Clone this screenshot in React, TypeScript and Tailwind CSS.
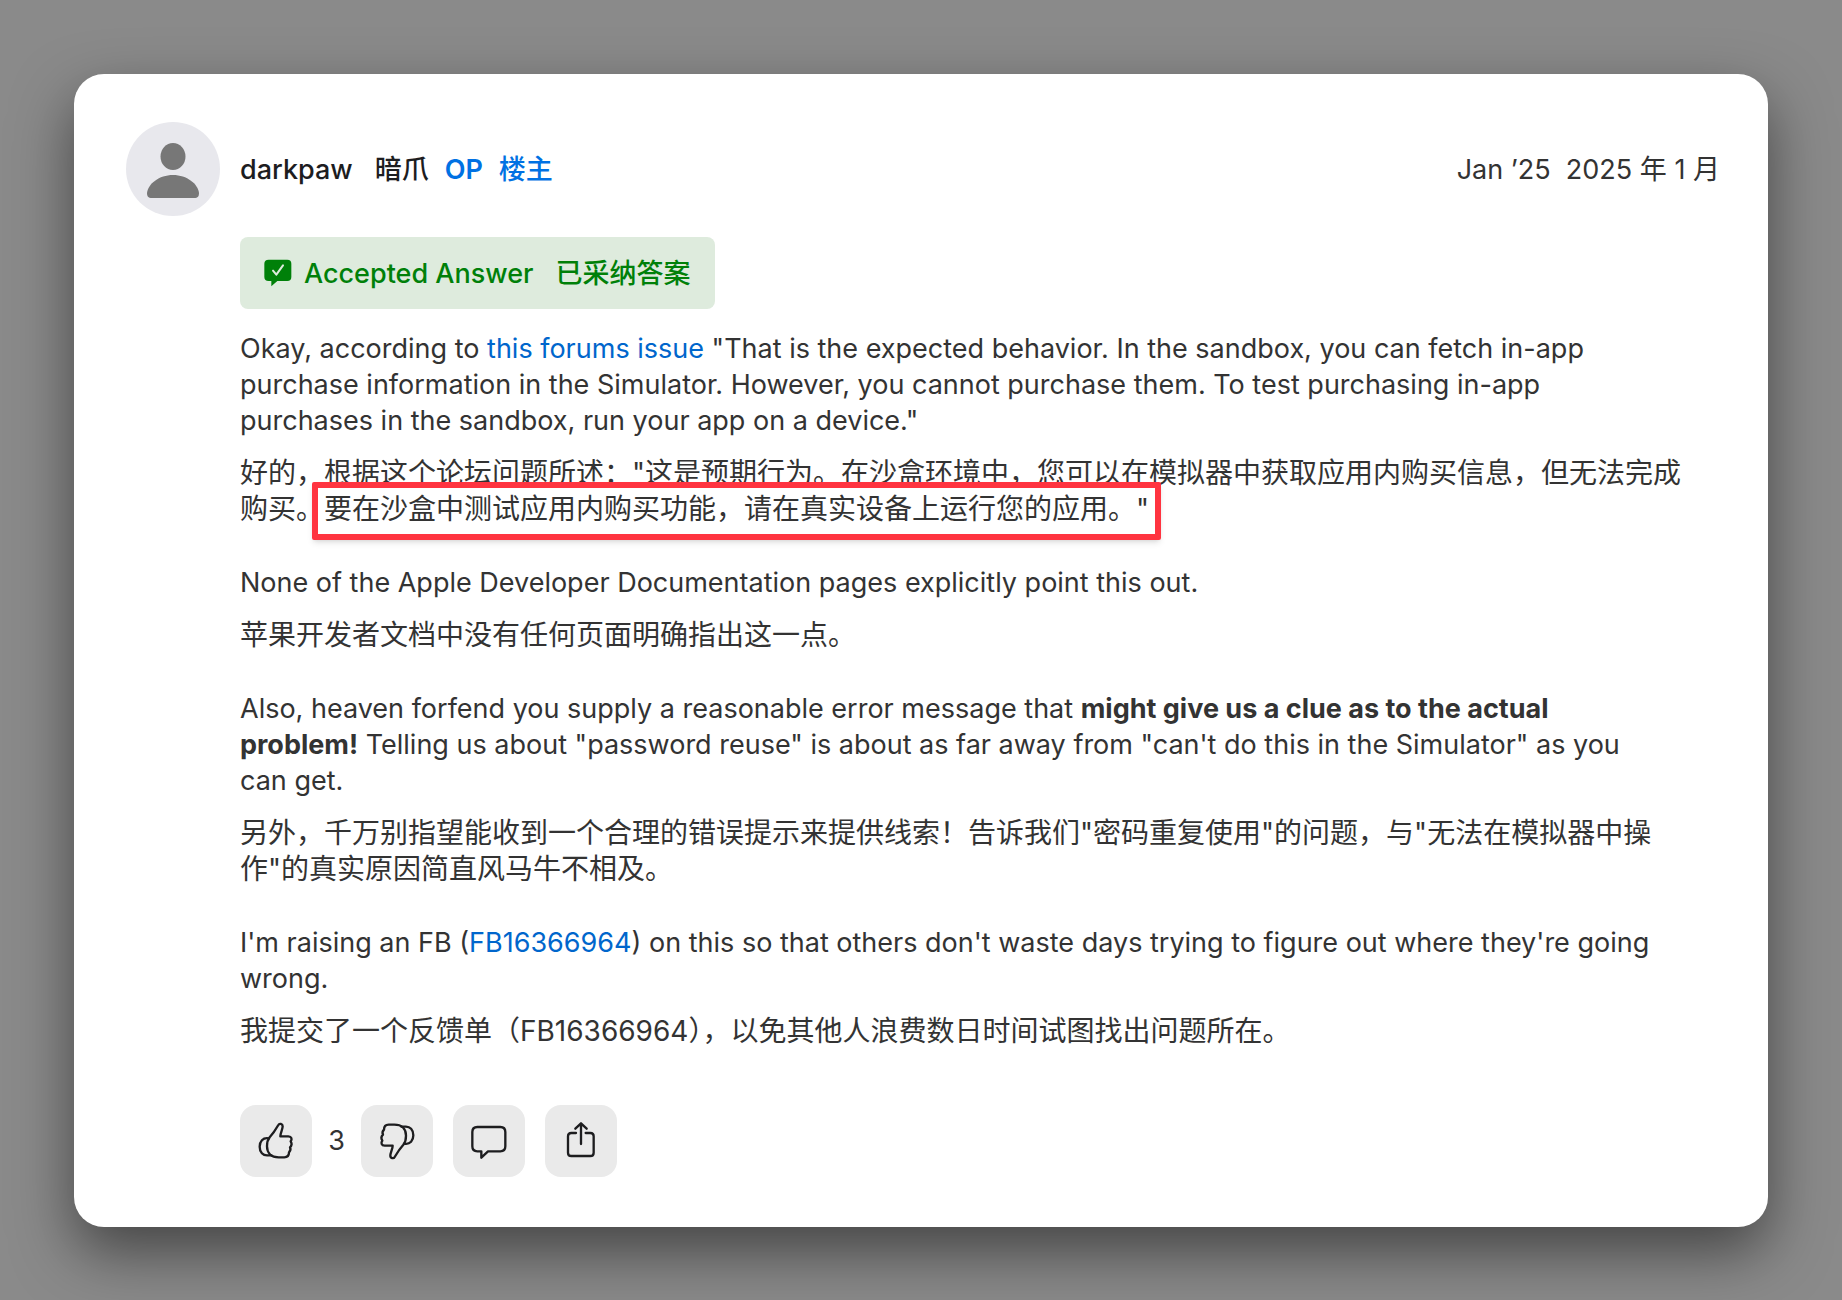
import { FC, ReactNode } from "react";

const LikeIcon: FC = () => (
  <svg className="size-9 overflow-visible" viewBox="0 0 108 108" fill="none" stroke="currentColor" strokeWidth="7" strokeLinecap="round" strokeLinejoin="round">
    <path d="M35 43C45 32 54 18 61 6C64 0 74 2 74 10C74 19 67 30 67 40H91C101 40 103 49 98 55C102 61 101 68 96 73C99 79 97 84 93 88C93 98 88 103 79 103H62C40 103 27 90 27 70C27 58 30 49 35 43Z" />
    <path d="M32 46C14 43 5 56 5 71C5 87 14 99 31 97H40" />
  </svg>
);

const DislikeIcon: FC = () => (
  <svg className="size-9 overflow-visible" viewBox="0 0 108 108" fill="none" stroke="currentColor" strokeWidth="7" strokeLinecap="round" strokeLinejoin="round">
    <g transform="rotate(180 54 54)">
      <path d="M35 43C45 32 54 18 61 6C64 0 74 2 74 10C74 19 67 30 67 40H91C101 40 103 49 98 55C102 61 101 68 96 73C99 79 97 84 93 88C93 98 88 103 79 103H62C40 103 27 90 27 70C27 58 30 49 35 43Z" />
      <path d="M32 46C14 43 5 56 5 71C5 87 14 99 31 97H40" />
    </g>
  </svg>
);

const CommentIcon: FC = () => (
  <svg className="size-9 overflow-visible" viewBox="0 0 108 108" fill="none" stroke="currentColor" strokeWidth="7" strokeLinejoin="round">
    <path d="M19 12H88Q103 12 103 27V70Q103 85 88 85H51L31 104V85H19Q4 85 4 70V27Q4 12 19 12Z" />
  </svg>
);

const ShareIcon: FC = () => (
  <svg className="size-9 overflow-visible" viewBox="0 0 108 108" fill="none" stroke="currentColor" strokeWidth="7" strokeLinecap="round" strokeLinejoin="round">
    <path d="M39 30H25Q15 30 15 40V89Q15 99 25 99H82Q92 99 92 89V40Q92 30 82 30H68" />
    <path d="M54 63V2M37 17L54 1L71 17" />
  </svg>
);

const ActionButton: FC<{ label: string; children: ReactNode }> = ({ label, children }) => (
  <button aria-label={label} className="flex size-[72px] items-center justify-center rounded-2xl bg-[#eaeaea] text-[#1d1d1f]">
    {children}
  </button>
);

const En: FC<{ children: ReactNode }> = ({ children }) => (
  <p className="text-[27px] leading-9">{children}</p>
);

const Zh: FC<{ children: ReactNode }> = ({ children }) => (
  <p lang="zh-CN" className="mt-4 -mr-5 text-[28px] leading-9">{children}</p>
);

export default function App() {
  return (
    <main className="min-h-screen bg-[#8a8a8a] p-[74px] font-['Inter','Noto_Sans_CJK_SC',sans-serif] text-[#333333]">
      <article className="rounded-[30px] bg-white pt-12 pr-12 pb-[50px] pl-13 shadow-[0_25px_60px_rgba(0,0,0,0.5)]">
        <header className="flex items-center">
          <svg className="size-[94px] shrink-0" viewBox="0 0 94 94">
            <circle cx="47" cy="47" r="47" fill="#e8e8ed" />
            <ellipse cx="47" cy="34.5" rx="12.5" ry="13.5" fill="#777777" />
            <path d="M26 76C22 76 21 74 21 71C22 62 33 53 47 53S72 62 73 71C73 74 72 76 68 76Z" fill="#777777" />
          </svg>
          <div className="ml-5 flex pt-0.5 text-[27px] leading-9 font-medium text-[#1d1d1f]">
            <span>darkpaw</span>
            <span className="ml-[22px]">暗爪</span>
            <span className="ml-4 font-semibold text-[#0071e3]">OP</span>
            <span className="ml-4 text-[#0071e3]">楼主</span>
          </div>
          <time dateTime="2025-01" className="ml-auto pt-0.5 text-[27px] leading-9 whitespace-pre">Jan ’25  2025 年 1 月</time>
        </header>

        <div className="mr-14 ml-[114px]">
          <div className="my-[21px] flex h-[72px] w-fit items-center rounded-lg bg-[#deebdd] px-6 text-[27px] font-medium text-[#008009]">
            <svg className="mr-3 size-7" viewBox="0 0 84 84">
              <path d="M14 2H70Q82 2 82 14V54Q82 66 70 66H40L22 82V66H14Q1 66 1 54V14Q1 2 14 2Z" fill="currentColor" />
              <path d="M27 35L37 47L57 19" fill="none" stroke="#deebdd" strokeWidth="6" strokeLinecap="round" strokeLinejoin="round" />
            </svg>
            <span className="pt-0.5">Accepted Answer</span>
            <span className="ml-[22px] pt-0.5">已采纳答案</span>
          </div>

          <div className="flex flex-col gap-[38px] pt-px">
            <section>
              <En>
                Okay, according to <a href="#issue" className="text-[#0066cc]">this forums issue</a> "That is the expected behavior. In the sandbox, you can fetch in-app purchase information in the Simulator. However, you cannot purchase them. To test purchasing in-app purchases in the sandbox, run your app on a device."
              </En>
              <Zh>
                好的，根据这个论坛问题所述："这是预期行为。在沙盒环境中，您可以在模拟器中获取应用内购买信息，但无法完成购买。
                <span className="relative whitespace-nowrap">
                  要在沙盒中测试应用内购买功能，请在真实设备上运行您的应用。"
                  <span className="absolute -inset-x-3 -top-2.5 h-[58px] rounded-xs border-6 border-[#ff3440] shadow-md" />
                </span>
              </Zh>
            </section>
            <section>
              <En>None of the Apple Developer Documentation pages explicitly point this out.</En>
              <Zh>苹果开发者文档中没有任何页面明确指出这一点。</Zh>
            </section>
            <section>
              <En>
                Also, heaven forfend you supply a reasonable error message that <strong className="font-bold">might give us a clue as to the actual problem!</strong> Telling us about "password reuse" is about as far away from "can't do this in the Simulator" as you can get.
              </En>
              <Zh>
                另外，千万别指望能收到一个合理的错误提示来提供线索！告诉我们"密码重复使用"的问题，与"无法在模拟器中操
                <br />
                作"的真实原因简直风马牛不相及。
              </Zh>
            </section>
            <section>
              <En>
                I'm raising an FB (<a href="#FB16366964" className="text-[#0066cc]">FB16366964</a>) on this so that others don't waste days trying to figure out where they're going wrong.
              </En>
              <Zh>我提交了一个反馈单（FB16366964），以免其他人浪费数日时间试图找出问题所在。</Zh>
            </section>
          </div>

          <footer className="mt-14 flex items-center">
            <ActionButton label="Like"><LikeIcon /></ActionButton>
            <span className="w-[49px] text-center text-[27px]">3</span>
            <ActionButton label="Dislike"><DislikeIcon /></ActionButton>
            <div className="ml-5 flex gap-5">
              <ActionButton label="Comment"><CommentIcon /></ActionButton>
              <ActionButton label="Share"><ShareIcon /></ActionButton>
            </div>
          </footer>
        </div>
      </article>
    </main>
  );
}
